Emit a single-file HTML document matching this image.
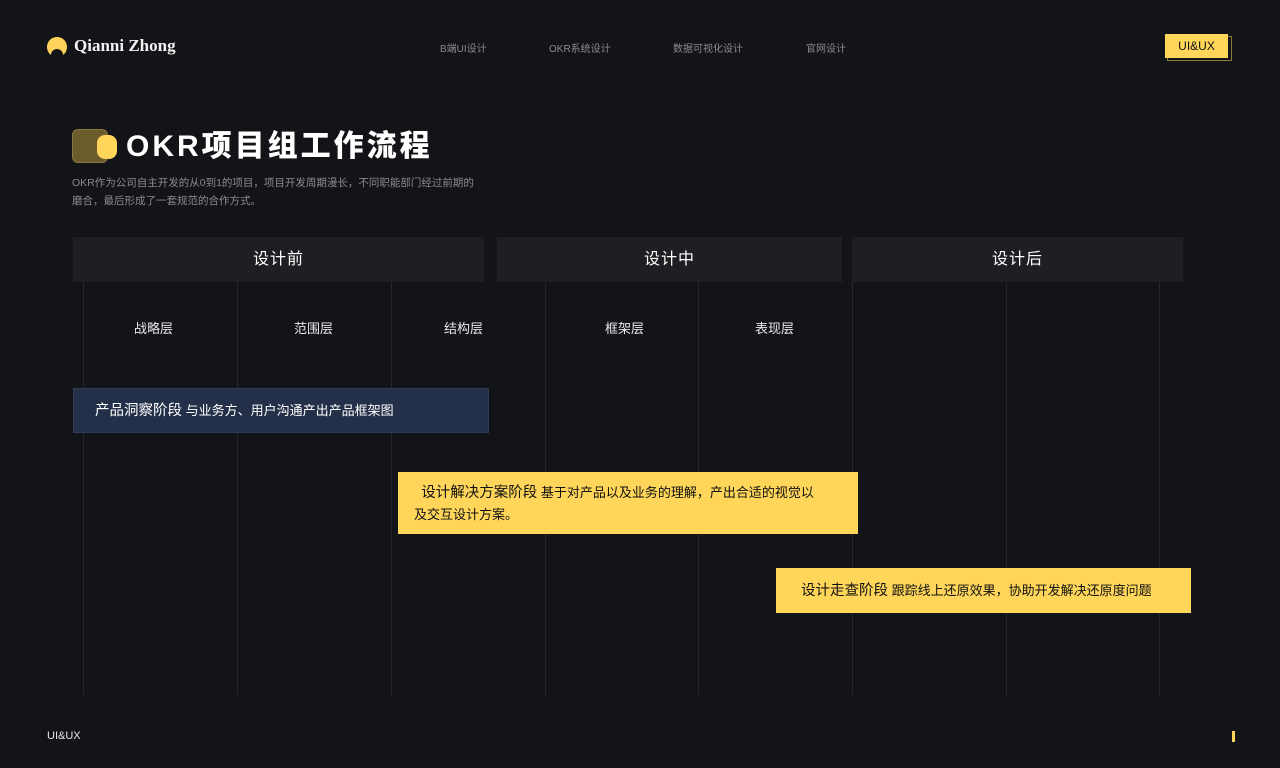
<!DOCTYPE html>
<html><head><meta charset="utf-8"><style>
*{margin:0;padding:0;box-sizing:border-box}
body{width:1280px;height:768px;background:#131417;position:relative;overflow:hidden;font-family:"Liberation Sans","Noto Sans CJK SC",sans-serif;color:#fff}
.a{position:absolute}
.nav{font-size:10px;color:#8a8b8f;top:40px}
.vl{position:absolute;top:282px;height:413px;width:1px;background:#26272b}
.hd{position:absolute;top:237px;height:45px;background:#1e1f22;font-size:16px;line-height:45px;text-align:center;color:#fff;letter-spacing:1px}
.ly{position:absolute;top:318px;font-size:13px;color:#e8e8e8}
</style></head><body>
<svg class="a" style="left:47px;top:37px" width="20" height="20" viewBox="0 0 20 20"><path d="M10 0A10 10 0 0 0 4 18A6 6 0 0 1 16 18A10 10 0 0 0 10 0Z" fill="#ffd35a"/></svg>
<div class="a" style="left:74px;top:36px;font-family:'Liberation Serif','Noto Serif CJK SC',serif;font-weight:bold;font-size:17px;color:#f2f2f2">Qianni Zhong</div>
<div class="a nav" style="left:440px">B端UI设计</div>
<div class="a nav" style="left:549px">OKR系统设计</div>
<div class="a nav" style="left:673px">数据可视化设计</div>
<div class="a nav" style="left:806px">官网设计</div>
<div class="a" style="left:1167px;top:36px;width:65px;height:25px;border:1px solid #8a7a3a"></div>
<div class="a" style="left:1165px;top:34px;width:63px;height:24px;background:#ffd65a;color:#111;font-size:12px;line-height:24px;text-align:center">UI&amp;UX</div>
<div class="a" style="left:72px;top:129px;width:36px;height:34px;background:#6b5c2c;border-radius:6px;border:1px solid #8a7a40"></div>
<div class="a" style="left:97px;top:135px;width:20px;height:24px;background:#ffd65a;border-radius:8px"></div>
<div class="a" style="left:126px;top:127px;font-size:30px;font-weight:900;letter-spacing:3px;color:#fff;line-height:40px">OKR项目组工作流程</div>
<div class="a" style="left:72px;top:174px;width:460px;font-size:10.5px;line-height:18px;color:#8a8b8f;white-space:nowrap">OKR作为公司自主开发的从0到1的项目，项目开发周期漫长，不同职能部门经过前期的<br>磨合，最后形成了一套规范的合作方式。</div>
<div class="vl" style="left:83px"></div><div class="vl" style="left:237px"></div><div class="vl" style="left:391px"></div><div class="vl" style="left:545px"></div><div class="vl" style="left:698px"></div><div class="vl" style="left:852px"></div><div class="vl" style="left:1006px"></div><div class="vl" style="left:1159px"></div>
<div class="hd" style="left:73px;width:411px">设计前</div>
<div class="hd" style="left:497px;width:345px">设计中</div>
<div class="hd" style="left:852px;width:331px">设计后</div>
<div class="ly" style="left:134px">战略层</div>
<div class="ly" style="left:294px">范围层</div>
<div class="ly" style="left:444px">结构层</div>
<div class="ly" style="left:605px">框架层</div>
<div class="ly" style="left:755px">表现层</div>
<div class="a" style="left:73px;top:388px;width:416px;height:45px;background:#243049;border:1px solid #2f3b55;padding-left:21px;line-height:43px;font-size:13px;color:#fff"><span style="font-size:14.5px">产品洞察阶段</span> 与业务方、用户沟通产出产品框架图</div>
<div class="a" style="left:398px;top:472px;width:460px;height:62px;background:#ffd65a;padding:10px 16px 0 16px;font-size:13px;line-height:22px;color:#111;white-space:nowrap">&nbsp;&nbsp;<span style="font-size:14.5px">设计解决方案阶段</span> 基于对产品以及业务的理解，产出合适的视觉以<br>及交互设计方案。</div>
<div class="a" style="left:776px;top:568px;width:415px;height:45px;background:#ffd65a;padding-left:25px;line-height:45px;font-size:13px;color:#111"><span style="font-size:14.5px">设计走查阶段</span> 跟踪线上还原效果，协助开发解决还原度问题</div>
<div class="a" style="left:47px;top:730px;font-size:11px;color:#e8e8e8">UI&amp;UX</div>
<div class="a" style="left:1232px;top:731px;width:3px;height:11px;background:#ffd65a"></div>
</body></html>
